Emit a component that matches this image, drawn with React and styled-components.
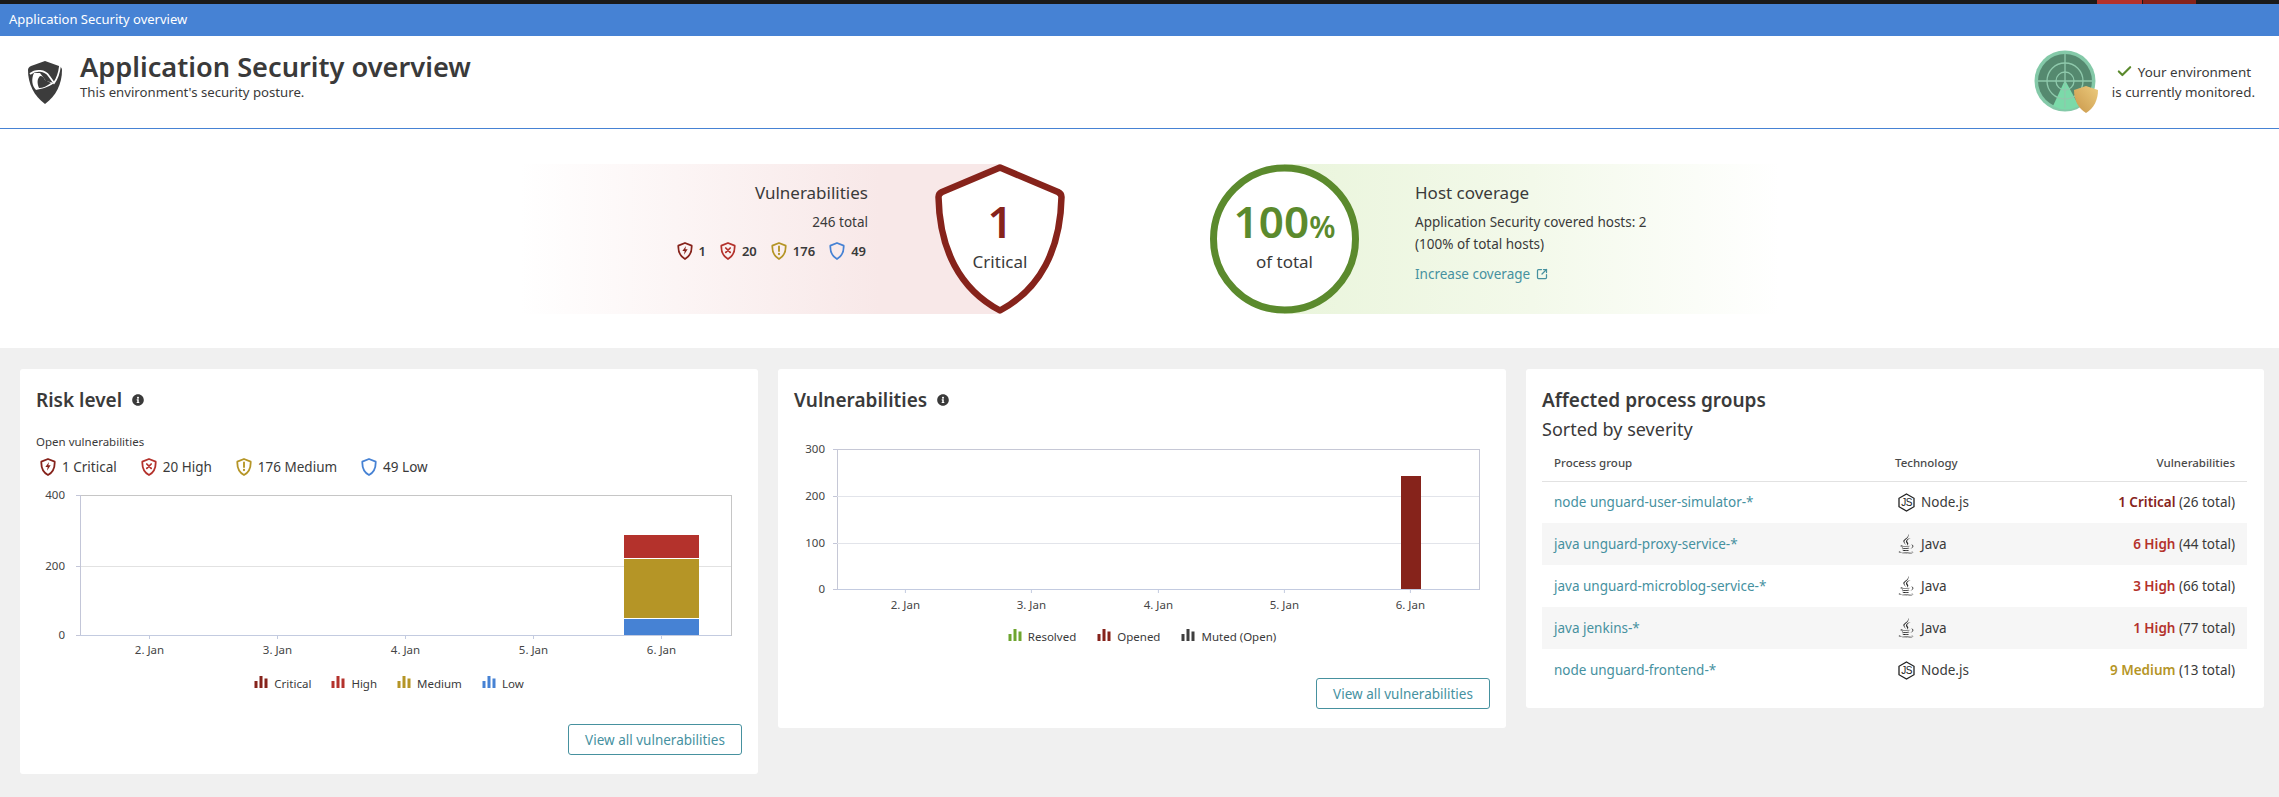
import React from 'react';
import styled, { createGlobalStyle } from 'styled-components';
import { FaInfoCircle, FaJava } from 'react-icons/fa';
import { Check, SquareArrowOutUpRight } from 'lucide-react';

const GlobalStyle = createGlobalStyle`
    html, body {
        margin: 0;
        padding: 0;
        background: #f0f0f0;
        color: #3a3a3a;
        font-family: 'Noto Sans', 'Open Sans', sans-serif;
    }
`;

const colors = {
    critical: '#86231b',
    high: '#b4322c',
    medium: '#b59526',
    low: '#4682d4',
    green: '#5b8a2d',
    teal: '#46919f',
    muted: '#3f3f3f',
    resolved: '#6ea52f'
};

const TopBar = styled.div`
    display: flex;
    justify-content: flex-end;
    height: 4px;
    padding-right: 83px;
    gap: 1px;
    background: #1a1a1a;
`;

const TopSegment = styled.div`
    width: ${(p) => p.$width}px;
    background: ${(p) => p.$color};
`;

const Breadcrumb = styled.div`
    height: 32px;
    padding-left: 9px;
    background: #4682d4;
    color: #fff;
    font-size: 13px;
    line-height: 31px;
`;

const Header = styled.header`
    display: flex;
    align-items: center;
    justify-content: space-between;
    height: 92px;
    padding: 0 24px 0 28px;
    background: #fff;
    border-bottom: 1px solid #4682d4;
`;

const TitleGroup = styled.div`
    display: flex;
    align-items: center;
    gap: 18px;
`;

const TitleText = styled.div`
    margin-bottom: 14px;
`;

const Title = styled.h1`
    margin: 0;
    font-size: 27.2px;
    line-height: 34px;
    font-weight: 600;
`;

const Subtitle = styled.div`
    font-size: 13.2px;
    line-height: 17px;
`;

const Monitor = styled.div`
    display: flex;
    align-items: center;
    gap: 14px;
`;

const MonitorText = styled.div`
    font-size: 13.4px;
    line-height: 20px;
    text-align: center;

    svg {
        vertical-align: -3px;
        margin-right: 5px;
    }
`;

const Summary = styled.section`
    display: flex;
    align-items: center;
    height: 219px;
    padding-left: 520px;
    background: #fff;
`;

const RiskPanel = styled.div`
    display: flex;
    justify-content: flex-end;
    align-items: flex-start;
    width: 480px;
    height: 150px;
    background: linear-gradient(to right, rgba(248, 232, 232, 0) 0%, #f8e8e8 75%);
`;

const RiskText = styled.div`
    padding-top: 17px;
    margin-right: 67px;
    text-align: right;
`;

const PanelHeading = styled.div`
    font-size: 17px;
    line-height: 24px;
`;

const PanelLine = styled.div`
    font-size: 13.5px;
    line-height: 22px;
`;

const RiskTotal = styled(PanelLine)`
    margin-top: 6px;
`;

const RiskCounts = styled.div`
    display: flex;
    justify-content: flex-end;
    gap: 14px;
    margin-top: 9px;
    padding-right: 2px;
`;

const RiskCount = styled.div`
    display: flex;
    align-items: center;
    gap: 6px;
    font-size: 13px;
    font-weight: 600;
`;

const ScoreBadge = styled.div`
    position: relative;
    flex: none;
    display: flex;
    flex-direction: column;
    align-items: center;
    width: ${(p) => p.$size}px;
    height: 150px;
    padding-top: 28px;
    box-sizing: border-box;
    margin-right: ${(p) => p.$overhang || 0}px;

    > svg {
        position: absolute;
        top: 0;
        left: 0;
    }
`;

const ScoreValue = styled.div`
    position: relative;
    height: 58px;
    font-size: 44px;
    line-height: 58px;
    font-weight: 600;
    color: ${(p) => p.$color};

    small {
        font-size: 30px;
        line-height: 0;
    }
`;

const ScoreLabel = styled.div`
    position: relative;
    font-size: 17px;
    line-height: 24px;
`;

const CoverageGroup = styled.div`
    display: flex;
    align-items: center;
    margin-left: 210px;
`;

const CoveragePanel = styled.div`
    width: 496px;
    height: 150px;
    margin-left: -75px;
    padding: 17px 0 0 131px;
    box-sizing: border-box;
    background: linear-gradient(to right, #eaf5dc 0%, #f3f9ea 50%, rgba(255, 255, 255, 0) 100%);
`;

const CoverageLink = styled.a`
    display: inline-flex;
    align-items: center;
    gap: 6px;
    margin-top: 9px;
    font-size: 13.5px;
    line-height: 20px;
    color: ${colors.teal};
`;

const Dashboard = styled.main`
    display: grid;
    grid-template-columns: 738px 728px 738px;
    gap: 20px;
    align-items: start;
    padding: 21px 0 23px 20px;
`;

const Card = styled.article`
    min-height: ${(p) => p.$height}px;
    padding: 16px;
    box-sizing: border-box;
    background: #fff;
    border-radius: 3px;
`;

const CardTitle = styled.h2`
    display: flex;
    align-items: center;
    gap: 10px;
    margin: 0;
    font-size: 19px;
    line-height: 30px;
    font-weight: 600;

    svg {
        font-size: 12px;
    }
`;

const SmallLabel = styled.div`
    margin-top: 19px;
    font-size: 11.5px;
    line-height: 16px;
`;

const RiskLegend = styled.div`
    display: flex;
    margin: 7px 0 0 4px;
    gap: 24px;
`;

const RiskLegendItem = styled.div`
    display: flex;
    align-items: center;
    gap: 6px;
    font-size: 13.5px;
    line-height: 20px;
`;

const ChartArea = styled.div`
    margin-left: ${(p) => p.$left}px;
    margin-top: ${(p) => p.$top}px;
`;

const ChartSvg = styled.svg`
    display: block;
    overflow: visible;

    text {
        font-family: 'Noto Sans', 'Open Sans', sans-serif;
        font-size: 11.5px;
        fill: #454545;
    }
`;

const ChartLegend = styled.div`
    display: flex;
    justify-content: center;
    gap: ${(p) => p.$gap}px;
    margin-top: ${(p) => p.$top}px;
`;

const ChartLegendItem = styled.div`
    display: flex;
    align-items: center;
    gap: 6px;
    font-size: 11.5px;
    line-height: 16px;

    svg {
        margin-top: -4px;
    }
`;

const CardFooter = styled.div`
    display: flex;
    justify-content: flex-end;
    margin-top: ${(p) => p.$top}px;
`;

const OutlineButton = styled.button`
    width: 174px;
    height: 31px;
    padding: 0;
    background: #fff;
    border: 1px solid ${colors.teal};
    border-radius: 3px;
    color: ${colors.teal};
    font-family: inherit;
    font-size: 13.5px;
`;

const Subheading = styled.div`
    margin-top: 2px;
    font-size: 18px;
    line-height: 24px;
`;

const Table = styled.table`
    width: 705px;
    margin-top: 3px;
    border-collapse: collapse;
    table-layout: fixed;
    font-size: 13.5px;
`;

const HeadCell = styled.th`
    width: ${(p) => (p.$width ? `${p.$width}px` : 'auto')};
    height: 37px;
    padding: 0 12px;
    box-sizing: border-box;
    font-size: 11.5px;
    font-weight: 500;
    color: #4a4a4a;
    text-align: ${(p) => (p.$right ? 'right' : 'left')};
    border-bottom: 1px solid #e2e2e2;
`;

const Row = styled.tr`
    height: 42px;
    background: ${(p) => (p.$shaded ? '#f6f6f6' : '#fff')};
`;

const Cell = styled.td`
    padding: 0 12px;
    text-align: ${(p) => (p.$right ? 'right' : 'left')};
`;

const ProcessLink = styled.a`
    color: ${colors.teal};
`;

const Tech = styled.div`
    display: flex;
    align-items: center;
    gap: 4px;
`;

const TechIcon = styled.span`
    display: flex;
    justify-content: center;
    width: 22px;
`;

const Severity = styled.span`
    font-weight: 600;
    color: ${(p) => p.$color};
`;

const glyphs = {
    bolt: <path d="M13.500 6 8 13.500h3.500l-1 5.500 5.500-8h-3.500z" fill="currentColor" />,
    cross: <path d="m8.700 9 6.600 6.600m0-6.600-6.600 6.600" stroke="currentColor" strokeWidth="2.600" strokeLinecap="round" />,
    bang: (
        <>
            <path d="M12 6.500v7" stroke="currentColor" strokeWidth="2.800" strokeLinecap="round" />
            <circle cx="12" cy="18" r="1.700" fill="currentColor" />
        </>
    )
};

const SeverityShield = ({ color, glyph }) => (
    <svg width="16" height="18" viewBox="0 0 24 27" fill="none" style={{ color }}>
        <path
            d="M12 1.500 22 5.500c.4 9.500-2.400 15.800-10 20C4.400 21.300 1.600 15 2 5.500z"
            stroke="currentColor"
            strokeWidth="2.700"
            strokeLinejoin="round"
        />
        {glyphs[glyph]}
    </svg>
);

const BarsIcon = ({ color }) => (
    <svg width="14" height="14" viewBox="0 0 14 14" fill={color}>
        <rect x="0.500" y="6" width="3" height="7" />
        <rect x="5.500" y="1" width="3" height="12" />
        <rect x="10.500" y="3.500" width="3" height="9.500" />
    </svg>
);

const AppLogo = () => (
    <svg width="34" height="43" viewBox="0 0 34 43">
        <path d="M17 0 31 5c2 1 3 2 3 4 0 14-6 26-17 34C6 35 0 23 0 9c0-2 1-3 3-4z" fill="#3c3c3c" />
        <path d="M2 13C8 8 17 9 21 15l5 7c3-4 5-9 6-17" stroke="#fff" strokeWidth="1.800" fill="none" />
        <path d="M6 12c-3 6-2 13 2 17 5-1 13-3 18-7l-8-2-6-8z" fill="#fff" />
        <path d="M12 15c3 0 4 2 5 4l6 3c-4 3-8 5-12 5-2-5-2-9 1-12z" fill="#3c3c3c" />
    </svg>
);

const RadarIcon = () => (
    <svg width="64" height="64" viewBox="0 0 64 64">
        <defs>
            <linearGradient id="goldShield" x1="0" x2="1" y1="1" y2="0">
                <stop offset="0" stopColor="#c9974a" />
                <stop offset="1" stopColor="#eccb7d" />
            </linearGradient>
        </defs>
        <circle cx="31" cy="31" r="30.500" fill="#84c9a8" />
        <circle cx="31" cy="31" r="27" fill="#55896f" />
        <path d="M31 30 19 56a27 27 0 0 0 26 0z" fill="#7bdaa9" />
        <g fill="none" stroke="#8fc9ac" strokeWidth="1.300">
            <circle cx="31" cy="31" r="9" />
            <circle cx="31" cy="31" r="18" />
            <path d="M31 4v54M4 31h54" />
        </g>
        <path d="M52 36 64 40c0 10-4 18-12 23-8-5-12-13-12-23z" fill="url(#goldShield)" />
    </svg>
);

const NodeIcon = () => (
    <svg width="17" height="19" viewBox="0 0 17 19">
        <path d="M8.500 1 16 5.300v8.400L8.500 18 1 13.700V5.300z" fill="none" stroke="#222" strokeWidth="1.300" />
        <text x="8.500" y="13.200" textAnchor="middle" fontSize="10" letterSpacing="-0.5" fontFamily="Liberation Sans" fill="#222">
            JS
        </text>
    </svg>
);

const dayLabels = ['2. Jan', '3. Jan', '4. Jan', '5. Jan', '6. Jan'];

const RiskChart = () => {
    const ticks = [69.500, 197.500, 325.500, 453.500, 581.500];
    return (
        <ChartSvg width="700" height="170" viewBox="0 0 700 170">
            <rect x="0.500" y="0.500" width="651" height="140" fill="none" stroke="#c6c6c6" />
            <line x1="0" x2="651" y1="71.500" y2="71.500" stroke="#e2e2e2" />
            <line x1="0.500" x2="0.500" y1="0" y2="140" stroke="#c3c6d8" />
            <line x1="0" x2="651" y1="140.500" y2="140.500" stroke="#c3cbe0" />
            <rect x="544" y="40" width="75" height="23" fill={colors.high} />
            <rect x="544" y="64" width="75" height="59" fill={colors.medium} />
            <rect x="544" y="124" width="75" height="16" fill={colors.low} />
            {[[0, '400'], [71, '200'], [140, '0']].map(([y, label]) => (
                <g key={label}>
                    <line x1="-4" x2="0" y1={y + 0.500} y2={y + 0.500} stroke="#c3c6d8" />
                    <text x="-15" y={y + 4} textAnchor="end">{label}</text>
                </g>
            ))}
            {ticks.map((x, i) => (
                <g key={x}>
                    <line x1={x} x2={x} y1="140" y2="144" stroke="#c3cbe0" />
                    <text x={x} y="159" textAnchor="middle">{dayLabels[i]}</text>
                </g>
            ))}
        </ChartSvg>
    );
};

const TrendChart = () => {
    const ticks = [68.400, 194.400, 321.400, 447.400, 573.400];
    return (
        <ChartSvg width="660" height="170" viewBox="0 0 660 170">
            <rect x="0.500" y="0.500" width="642" height="140" fill="none" stroke="#c6c8d6" />
            <line x1="0" x2="642" y1="47.500" y2="47.500" stroke="#e2e4ea" />
            <line x1="0" x2="642" y1="94.500" y2="94.500" stroke="#e2e4ea" />
            <line x1="0" x2="642" y1="140.500" y2="140.500" stroke="#c3cbe0" />
            <rect x="564" y="27" width="20" height="113" fill={colors.critical} />
            {[[0, '300'], [47, '200'], [94, '100'], [140, '0']].map(([y, label]) => (
                <g key={label}>
                    <line x1="-4" x2="0" y1={y + 0.500} y2={y + 0.500} stroke="#c3c6d8" />
                    <text x="-12" y={y + 4} textAnchor="end">{label}</text>
                </g>
            ))}
            {ticks.map((x, i) => (
                <g key={x}>
                    <line x1={x} x2={x} y1="140" y2="144" stroke="#c3cbe0" />
                    <text x={x} y="160" textAnchor="middle">{dayLabels[i]}</text>
                </g>
            ))}
        </ChartSvg>
    );
};

const groups = [
    { name: 'node unguard-user-simulator-*', tech: 'Node.js', count: '1 Critical', color: colors.critical, total: 26 },
    { name: 'java unguard-proxy-service-*', tech: 'Java', count: '6 High', color: colors.high, total: 44 },
    { name: 'java unguard-microblog-service-*', tech: 'Java', count: '3 High', color: colors.high, total: 66 },
    { name: 'java jenkins-*', tech: 'Java', count: '1 High', color: colors.high, total: 77 },
    { name: 'node unguard-frontend-*', tech: 'Node.js', count: '9 Medium', color: colors.medium, total: 13 }
];

const App = () => (
    <>
        <GlobalStyle />
        <TopBar>
            <TopSegment $width={45} $color={colors.high} />
            <TopSegment $width={53} $color={colors.critical} />
        </TopBar>
        <Breadcrumb>Application Security overview</Breadcrumb>
        <Header>
            <TitleGroup>
                <AppLogo />
                <TitleText>
                    <Title>Application Security overview</Title>
                    <Subtitle>This environment's security posture.</Subtitle>
                </TitleText>
            </TitleGroup>
            <Monitor>
                <RadarIcon />
                <MonitorText>
                    <Check size={17} strokeWidth={3} color={colors.green} />
                    Your environment
                    <br />
                    is currently monitored.
                </MonitorText>
            </Monitor>
        </Header>
        <Summary>
            <RiskPanel>
                <RiskText>
                    <PanelHeading>Vulnerabilities</PanelHeading>
                    <RiskTotal>246 total</RiskTotal>
                    <RiskCounts>
                        <RiskCount><SeverityShield color={colors.critical} glyph="bolt" />1</RiskCount>
                        <RiskCount><SeverityShield color={colors.high} glyph="cross" />20</RiskCount>
                        <RiskCount><SeverityShield color={colors.medium} glyph="bang" />176</RiskCount>
                        <RiskCount><SeverityShield color={colors.low} />49</RiskCount>
                    </RiskCounts>
                </RiskText>
                <ScoreBadge $size={130} $overhang={-65}>
                    <svg width="130" height="150" viewBox="0 0 130 150">
                        <path
                            d="M65 3.500 123 28c2 1 3.500 2.500 3.500 5-1 52-21 92-61.500 113.500C24.500 125 4.500 85 3.500 33c0-2.500 1.500-4 3.500-5z"
                            fill="#fff"
                            stroke={colors.critical}
                            strokeWidth="6.500"
                            strokeLinejoin="round"
                        />
                    </svg>
                    <ScoreValue $color={colors.critical}>1</ScoreValue>
                    <ScoreLabel>Critical</ScoreLabel>
                </ScoreBadge>
            </RiskPanel>
            <CoverageGroup>
                <ScoreBadge $size={149}>
                    <svg width="149" height="150" viewBox="0 0 149 150">
                        <circle cx="74.500" cy="75" r="71" fill="#fff" stroke={colors.green} strokeWidth="7" />
                    </svg>
                    <ScoreValue $color={colors.green}>100<small>%</small></ScoreValue>
                    <ScoreLabel>of total</ScoreLabel>
                </ScoreBadge>
                <CoveragePanel>
                    <PanelHeading>Host coverage</PanelHeading>
                    <RiskTotal>Application Security covered hosts: 2</RiskTotal>
                    <PanelLine>(100% of total hosts)</PanelLine>
                    <CoverageLink>
                        Increase coverage
                        <SquareArrowOutUpRight size={12} strokeWidth={2.500} />
                    </CoverageLink>
                </CoveragePanel>
            </CoverageGroup>
        </Summary>
        <Dashboard>
            <Card $height={405}>
                <CardTitle>Risk level <FaInfoCircle /></CardTitle>
                <SmallLabel>Open vulnerabilities</SmallLabel>
                <RiskLegend>
                    <RiskLegendItem><SeverityShield color={colors.critical} glyph="bolt" />1 Critical</RiskLegendItem>
                    <RiskLegendItem><SeverityShield color={colors.high} glyph="cross" />20 High</RiskLegendItem>
                    <RiskLegendItem><SeverityShield color={colors.medium} glyph="bang" />176 Medium</RiskLegendItem>
                    <RiskLegendItem><SeverityShield color={colors.low} />49 Low</RiskLegendItem>
                </RiskLegend>
                <ChartArea $left={44} $top={18}>
                    <RiskChart />
                </ChartArea>
                <ChartLegend $gap={20} $top={11}>
                    <ChartLegendItem><BarsIcon color={colors.critical} />Critical</ChartLegendItem>
                    <ChartLegendItem><BarsIcon color={colors.high} />High</ChartLegendItem>
                    <ChartLegendItem><BarsIcon color={colors.medium} />Medium</ChartLegendItem>
                    <ChartLegendItem><BarsIcon color={colors.low} />Low</ChartLegendItem>
                </ChartLegend>
                <CardFooter $top={32}>
                    <OutlineButton>View all vulnerabilities</OutlineButton>
                </CardFooter>
            </Card>
            <Card $height={359}>
                <CardTitle>Vulnerabilities <FaInfoCircle /></CardTitle>
                <ChartArea $left={43} $top={34}>
                    <TrendChart />
                </ChartArea>
                <ChartLegend $gap={21} $top={10}>
                    <ChartLegendItem><BarsIcon color={colors.resolved} />Resolved</ChartLegendItem>
                    <ChartLegendItem><BarsIcon color={colors.critical} />Opened</ChartLegendItem>
                    <ChartLegendItem><BarsIcon color={colors.muted} />Muted (Open)</ChartLegendItem>
                </ChartLegend>
                <CardFooter $top={33}>
                    <OutlineButton>View all vulnerabilities</OutlineButton>
                </CardFooter>
            </Card>
            <Card $height={339}>
                <CardTitle>Affected process groups</CardTitle>
                <Subheading>Sorted by severity</Subheading>
                <Table>
                    <thead>
                        <tr>
                            <HeadCell $width={341}>Process group</HeadCell>
                            <HeadCell $width={170}>Technology</HeadCell>
                            <HeadCell $right>Vulnerabilities</HeadCell>
                        </tr>
                    </thead>
                    <tbody>
                        {groups.map((group, i) => (
                            <Row key={group.name} $shaded={i % 2 === 1}>
                                <Cell><ProcessLink>{group.name}</ProcessLink></Cell>
                                <Cell>
                                    <Tech>
                                        <TechIcon>
                                            {group.tech === 'Java' ? <FaJava size={20} color="#222" /> : <NodeIcon />}
                                        </TechIcon>
                                        {group.tech}
                                    </Tech>
                                </Cell>
                                <Cell $right>
                                    <Severity $color={group.color}>{group.count}</Severity> ({group.total} total)
                                </Cell>
                            </Row>
                        ))}
                    </tbody>
                </Table>
            </Card>
        </Dashboard>
    </>
);

export default App;
